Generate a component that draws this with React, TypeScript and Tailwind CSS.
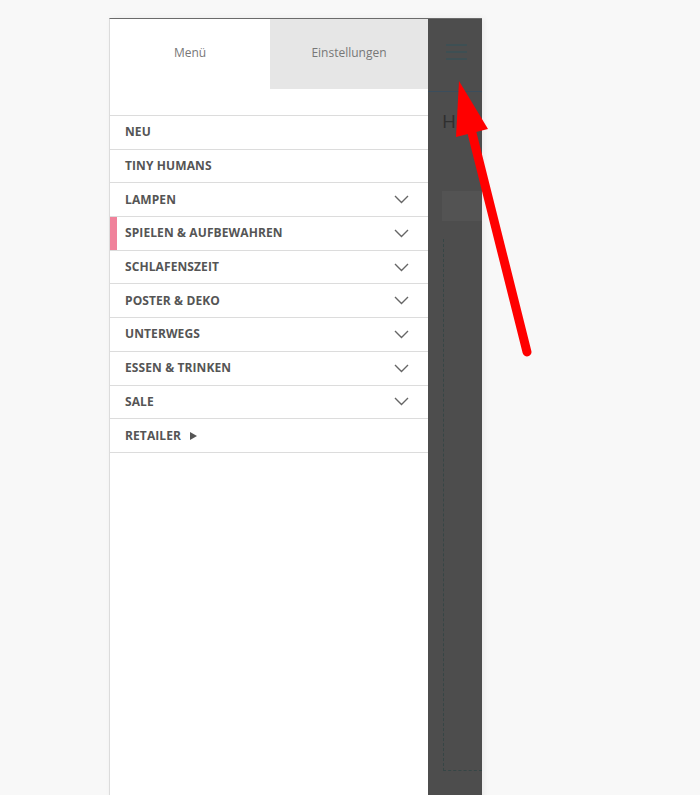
import React from 'react';

const items = [
  { label: 'NEU' },
  { label: 'TINY HUMANS' },
  { label: 'LAMPEN', chevron: true },
  { label: 'SPIELEN & AUFBEWAHREN', chevron: true, active: true },
  { label: 'SCHLAFENSZEIT', chevron: true },
  { label: 'POSTER & DEKO', chevron: true },
  { label: 'UNTERWEGS', chevron: true },
  { label: 'ESSEN & TRINKEN', chevron: true },
  { label: 'SALE', chevron: true },
  { label: 'RETAILER', arrow: true },
];

function Chevron() {
  return (
    <svg width="15" height="9" viewBox="0 0 15 9" fill="none">
      <path d="M1 1l6.5 6.5L14 1" stroke="#666" strokeWidth="1.4" />
    </svg>
  );
}

export default function App() {
  return (
    <div
      className="relative h-[795px] overflow-hidden bg-[#f8f8f8] pt-[18px] pl-[109px]"
      style={{ fontFamily: '"Open Sans", "Liberation Sans", sans-serif' }}
    >
      <div className="flex h-[800px] w-[373px] border-t border-l border-t-[#6b6b6b] border-l-[#dcdcdc] shadow-[2px_0_6px_rgba(0,0,0,0.06)]">
        {/* drawer */}
        <div className="flex w-[318px] flex-col bg-white">
          <div className="flex h-[70px]">
            <div className="flex w-[160px] items-center justify-center pb-[3px] text-[12px] text-[#777]">Menü</div>
            <div className="flex flex-1 items-center justify-center bg-[#e6e6e6] pb-[3px] text-[12px] text-[#777]">
              Einstellungen
            </div>
          </div>
          <div className="h-[26px]" />
          <div className="border-t border-[#dcdcdc]">
            {items.map((item) => (
              <div
                key={item.label}
                className="relative flex h-[33.7px] items-center border-b border-[#dcdcdc] pl-[15px] pr-[19px]"
              >
                {item.active && <div className="absolute left-0 top-0 h-full w-[7px] bg-[#f0829b]" />}
                <span className="text-[12px] font-bold tracking-[0.1px] text-[#555]">{item.label}</span>
                {item.arrow && (
                  <svg className="ml-[9px]" width="7" height="8" viewBox="0 0 7 8">
                    <polygon points="0,0 7,4 0,8" fill="#555" />
                  </svg>
                )}
                {item.chevron && (
                  <span className="ml-auto flex">
                    <Chevron />
                  </span>
                )}
              </div>
            ))}
          </div>
        </div>
        {/* dimmed page behind */}
        <div className="flex w-[54px] flex-col bg-[#4d4d4d]">
          <div className="flex h-[73px] flex-col gap-[5px] border-b border-[#3b4d5c] pl-[18px] pt-[25px]">
            <div className="h-[2px] w-[21px] bg-[#3e4f53]" />
            <div className="h-[2px] w-[21px] bg-[#3e4f53]" />
            <div className="h-[2px] w-[21px] bg-[#3e4f53]" />
          </div>
          <div className="pl-[14px] pt-[17px] text-[19px] leading-[24px] text-[#2f2f2f]">He</div>
          <div className="ml-[14px] mt-[58px] h-[30px] bg-[#535353]" />
          <div className="ml-[15px] mt-[18px] h-[532px] border-b border-l border-dashed border-[#364646]" />
        </div>
      </div>
      {/* red annotation arrow */}
      <svg className="pointer-events-none absolute left-0 top-0" width="700" height="795">
        <line x1="527" y1="352" x2="470" y2="125" stroke="#ff0000" strokeWidth="9" strokeLinecap="round" />
        <polygon points="459,81 456,137 488,129" fill="#ff0000" />
      </svg>
    </div>
  );
}
